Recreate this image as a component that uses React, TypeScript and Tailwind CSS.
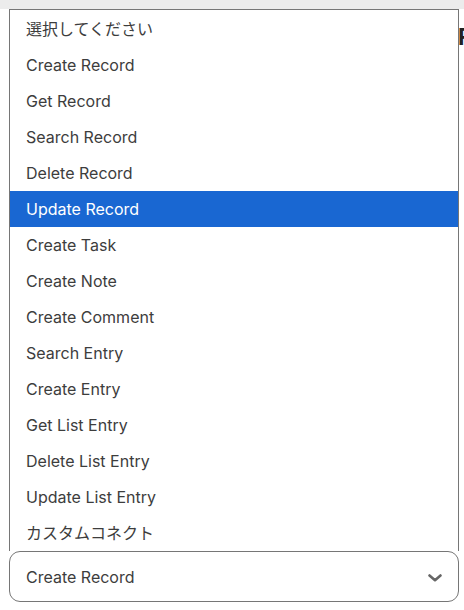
const options = [
  '選択してください',
  'Create Record',
  'Get Record',
  'Search Record',
  'Delete Record',
  'Update Record',
  'Create Task',
  'Create Note',
  'Create Comment',
  'Search Entry',
  'Create Entry',
  'Get List Entry',
  'Delete List Entry',
  'Update List Entry',
  'カスタムコネクト',
]

const selected = 'Update Record'

export default function App() {
  return (
    <div
      className="relative w-[464px] h-[610px] overflow-hidden bg-white"
      style={{ fontFamily: 'Inter, "Noto Sans CJK JP", sans-serif' }}
    >
      <div className="h-[9px] bg-[#ececec]" />

      {/* heading peeking from behind the list */}
      <div className="absolute left-[458px] top-[22px] text-[23px] font-bold leading-[30px] text-[#222] whitespace-nowrap">
        Record
      </div>

      <div className="relative ml-[9px] w-[450px]">
        <ul className="border-x border-t border-[#767676] bg-white pt-px">
          {options.map((opt) => {
            const active = opt === selected
            return (
              <li
                key={opt}
                className={`h-9 flex items-center pl-4 text-[16px] ${
                  active ? 'bg-[#1967d2] text-white' : 'text-[#3d3d3d]'
                }`}
              >
                {opt}
              </li>
            )
          })}
        </ul>

        <div className="h-[51px] flex items-center justify-between rounded-[11px] border border-[#767676] bg-white pl-4 pr-[16px]">
          <span className="text-[16px] text-[#3d3d3d]">Create Record</span>
          <svg width="14" height="8" viewBox="0 0 14 8" className="mt-[2px]">
            <path d="M1.5 1.5 L7 6.2 L12.5 1.5" fill="none" stroke="#666" strokeWidth="2.6" strokeLinecap="round" strokeLinejoin="round" />
          </svg>
        </div>
      </div>
    </div>
  )
}
